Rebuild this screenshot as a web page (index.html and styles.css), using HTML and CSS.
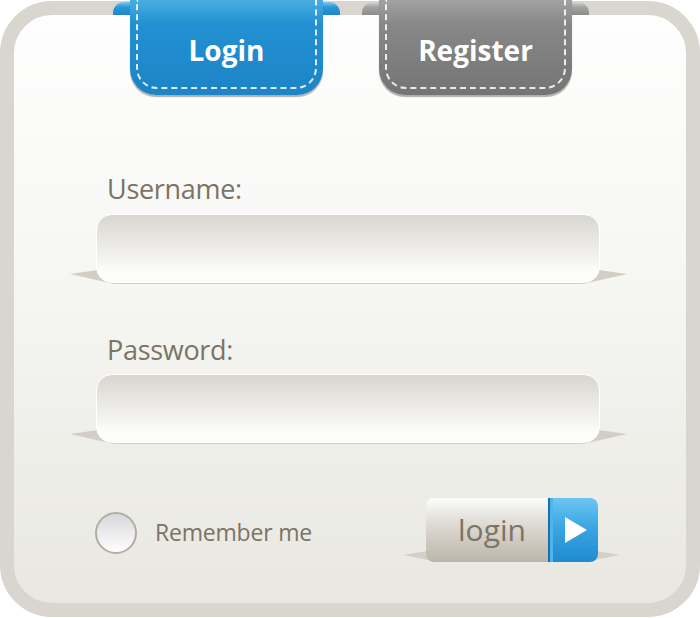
FILE: index.html
```html
<!DOCTYPE html>
<html lang="en">

<head>
	<meta charset="UTF-8" />
	<meta name="viewport" content="width=device-width, initial-scale=1.0" />
	<title>Login</title>
	<link rel="stylesheet" href="styles.css">
</head>

<body>
	<div class="panel">
		<div class="tabs">
			<div class="tab tab-blue">
				<div class="tab-face">Login</div>
			</div>
			<div class="tab tab-gray">
				<div class="tab-face">Register</div>
			</div>
		</div>

		<form class="form" onsubmit="return false;">
			<label class="label label-first" for="username">Username:</label>
			<div class="field">
				<input id="username" type="text" />
			</div>

			<label class="label" for="password">Password:</label>
			<div class="field">
				<input id="password" type="password" />
			</div>

			<div class="bottom-row">
				<input id="remember" class="remember" type="checkbox" />
				<label class="remember-text" for="remember">Remember me</label>

				<div class="btn-wrap">
					<button class="btn" type="submit">
						<span class="btn-text">login</span>
						<span class="btn-arrow">
							<svg width="24" height="28" viewBox="0 0 24 28">
								<polygon points="1,1 23,14 1,27" fill="#fff" />
							</svg>
						</span>
					</button>
				</div>
			</div>
		</form>
	</div>
</body>

</html>
```

FILE: styles.css
```css
body {
	margin: 0;
	background: #fff;
	font-family: 'Open Sans', 'Noto Sans', sans-serif;
}

.panel {
	position: relative;
	z-index: 0;
	box-sizing: border-box;
	width: 700px;
	height: 616px;
	margin-top: 1px;
	border: 14px solid #d9d6cf;
	border-radius: 52px;
	background: linear-gradient(#fefefe 0%, #f6f6f3 45%, #e8e7e1 100%);
}

/* tabs */

.tabs {
	display: flex;
	gap: 22px;
	margin-top: -15px;
	padding-left: 99px;
}

.tab {
	position: relative;
	width: 227px;
	height: 96px;
}

.tab::before {
	content: "";
	position: absolute;
	top: 2px;
	left: 0;
	right: 0;
	height: 13px;
	border-radius: 11px 11px 0 0;
}

.tab-face {
	position: relative;
	box-sizing: border-box;
	height: 95px;
	margin: 0 17px;
	padding-top: 33px;
	border-radius: 0 0 26px 26px;
	color: #fff;
	font-size: 28px;
	font-weight: 700;
	line-height: 34px;
	text-align: center;
	box-shadow: 0 2px 1px rgba(90, 80, 60, 0.45);
}

.tab-face::after {
	content: "";
	position: absolute;
	top: 0;
	left: 6px;
	right: 6px;
	bottom: 6px;
	border: 2px dashed rgba(255, 255, 255, 0.85);
	border-top: none;
	border-radius: 0 0 21px 21px;
}

.tab-blue::before {
	background: linear-gradient(#7cc9f0, #2a98d9 40%, #1d86c8);
}

.tab-blue .tab-face {
	background: linear-gradient(#49ade3 0%, #2290d2 25%, #1c84c7 100%);
}

.tab-gray::before {
	background: linear-gradient(#d4d4d2, #a3a3a2 40%, #8c8c8b);
}

.tab-gray .tab-face {
	background: linear-gradient(#a2a2a2 0%, #888 25%, #747474 100%);
}

/* form */

.form {
	padding: 0 86px 0 82px;
}

.label {
	display: block;
	margin: 50px 0 7px 11px;
	color: #7b7363;
	font-size: 27px;
	line-height: 34px;
	letter-spacing: -0.3px;
}

.label-first {
	margin-top: 76px;
	margin-bottom: 8px;
}

.field {
	position: relative;
}

.field::before {
	content: "";
	position: absolute;
	z-index: -1;
	left: -26px;
	right: -27px;
	bottom: -1px;
	height: 14px;
	background: #d2cec6;
	clip-path: polygon(0 28%, 28px 0, calc(100% - 28px) 0, 100% 28%, calc(100% - 44px) 100%, 44px 100%);
}

.field input {
	display: block;
	box-sizing: border-box;
	width: 100%;
	height: 69px;
	border: 1px solid #fff;
	border-radius: 16px;
	background: linear-gradient(#d9d6d0 0%, #ebeae6 45%, #fcfcfb 85%);
	outline: none;
}

/* bottom row */

.bottom-row {
	display: flex;
	align-items: center;
	margin-top: 55px;
	height: 64px;
}

.remember {
	appearance: none;
	box-sizing: border-box;
	width: 42px;
	height: 42px;
	margin: 6px 0 0 -1px;
	border: 2px solid #b3ada2;
	border-radius: 50%;
	background: linear-gradient(#d8d8dc, #fff);
}

.remember-text {
	margin: 4px 0 0 18px;
	color: #7b7363;
	font-size: 23px;
	letter-spacing: -0.2px;
}

.btn-wrap {
	position: relative;
	margin-left: auto;
	margin-right: 2px;
}

.btn-wrap::before {
	content: "";
	position: absolute;
	z-index: -1;
	left: -23px;
	right: -22px;
	bottom: 1px;
	height: 10px;
	background: #d4d0c8;
	clip-path: polygon(0 40%, 24px 0, calc(100% - 24px) 0, 100% 40%, calc(100% - 30px) 100%, 30px 100%);
}

.btn {
	display: flex;
	height: 64px;
	padding: 0;
	border: none;
	border-radius: 8px;
	background: none;
	font-family: inherit;
	cursor: pointer;
}

.btn-text {
	display: flex;
	align-items: center;
	justify-content: center;
	box-sizing: border-box;
	width: 122px;
	padding: 0 0 2px 10px;
	border-radius: 8px 0 0 8px;
	background: linear-gradient(#fdfdfc 0%, #e2dfd9 35%, #bbb5a9 100%);
	color: #7c7464;
	font-size: 30px;
}

.btn-arrow {
	display: flex;
	align-items: center;
	justify-content: center;
	width: 48px;
	border-left: 2px solid #1770b0;
	border-radius: 0 8px 8px 0;
	background: linear-gradient(#6cc6f2 0%, #3aa6e3 45%, #1f8bd0 100%);
	box-shadow: inset 3px 0 0 #4fb4ea;
}

.btn-arrow svg {
	margin-left: 3px;
}
```
